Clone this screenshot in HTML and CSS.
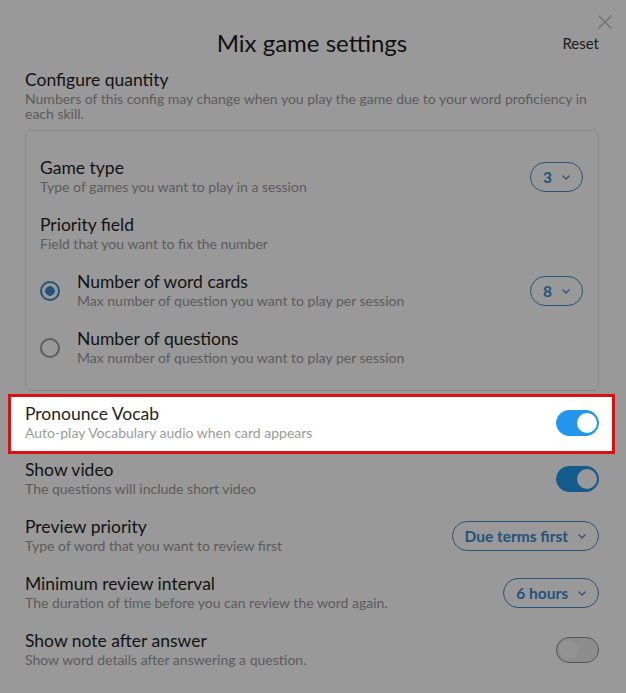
FILE: index.html
```html
<!DOCTYPE html>
<html lang="en">
<head>
  <meta charset="UTF-8">
  <title>Mix game settings</title>
  <link rel="stylesheet" href="styles.css">
</head>
<body>
<div class="modal">
  <button class="close" aria-label="Close">
    <svg width="14" height="14" viewBox="0 0 14 14"><path d="M1 1L13 13M13 1L1 13" stroke="currentColor" stroke-width="1.6" stroke-linecap="round"/></svg>
  </button>

  <div class="head">
    <span></span>
    <h1>Mix game settings</h1>
    <a class="reset">Reset</a>
  </div>

  <div class="intro">
    <div class="title">Configure quantity</div>
    <div class="sub">Numbers of this config may change when you play the game due to your word proficiency in each skill.</div>
  </div>

  <div class="card">
    <div class="row">
      <div class="text">
        <div class="title">Game type</div>
        <div class="sub">Type of games you want to play in a session</div>
      </div>
      <div class="select">3 <svg width="8" height="5" viewBox="0 0 8 5"><path d="M1 1l3 3 3-3" fill="none" stroke="currentColor" stroke-width="1.3" stroke-linecap="round" stroke-linejoin="round"/></svg></div>
    </div>
    <div class="row">
      <div class="text">
        <div class="title">Priority field</div>
        <div class="sub">Field that you want to fix the number</div>
      </div>
    </div>
    <div class="row">
      <span class="radio on"></span>
      <div class="text">
        <div class="title">Number of word cards</div>
        <div class="sub">Max number of question you want to play per session</div>
      </div>
      <div class="select">8 <svg width="8" height="5" viewBox="0 0 8 5"><path d="M1 1l3 3 3-3" fill="none" stroke="currentColor" stroke-width="1.3" stroke-linecap="round" stroke-linejoin="round"/></svg></div>
    </div>
    <div class="row">
      <span class="radio"></span>
      <div class="text">
        <div class="title">Number of questions</div>
        <div class="sub">Max number of question you want to play per session</div>
      </div>
    </div>
  </div>

  <div class="row highlight">
    <div class="text">
      <div class="title">Pronounce Vocab</div>
      <div class="sub">Auto-play Vocabulary audio when card appears</div>
    </div>
    <span class="toggle on"></span>
  </div>

  <div class="row">
    <div class="text">
      <div class="title">Show video</div>
      <div class="sub">The questions will include short video</div>
    </div>
    <span class="toggle on"></span>
  </div>

  <div class="row">
    <div class="text">
      <div class="title">Preview priority</div>
      <div class="sub">Type of word that you want to review first</div>
    </div>
    <div class="select">Due terms first <svg width="8" height="5" viewBox="0 0 8 5"><path d="M1 1l3 3 3-3" fill="none" stroke="currentColor" stroke-width="1.3" stroke-linecap="round" stroke-linejoin="round"/></svg></div>
  </div>

  <div class="row">
    <div class="text">
      <div class="title">Minimum review interval</div>
      <div class="sub">The duration of time before you can review the word again.</div>
    </div>
    <div class="select">6 hours <svg width="8" height="5" viewBox="0 0 8 5"><path d="M1 1l3 3 3-3" fill="none" stroke="currentColor" stroke-width="1.3" stroke-linecap="round" stroke-linejoin="round"/></svg></div>
  </div>

  <div class="row">
    <div class="text">
      <div class="title">Show note after answer</div>
      <div class="sub">Show word details after answering a question.</div>
    </div>
    <span class="toggle"></span>
  </div>
</div>

<!--dim layer, the highlighted row sits above it-->
<div class="overlay"></div>
</body>
</html>
```

FILE: styles.css
```css
* {
  margin: 0;
  padding: 0;
  box-sizing: border-box;
}
html,body {
  height: 100%;
  background: #fff;
  font-family: "Lato", "Noto Sans", sans-serif;
  color: #1f1f1f;
  overflow: hidden;
}

.modal {
  position: relative;
  padding: 28px 27px 0 25px;
}

.close {
  position: absolute;
  top: 15px;
  right: 14px;
  border: 0;
  background: none;
  color: #c4c4c4;
  display: flex;
}

.head {
  display: grid;
  grid-template-columns: 1fr auto 1fr;
  align-items: center;
  height: 30px;
}
.head h1 {
  font-size: 24px;
  font-weight: 400;
  line-height: 30px;
  color: #1c1c1c;
}
.reset {
  justify-self: end;
  font-size: 15px;
  color: #333;
}

.title {
  font-size: 17.5px;
  line-height: 20px;
}
.sub {
  font-size: 14px;
  line-height: 18px;
  color: #9a9a9a;
}

.intro {
  margin-top: 12px;
}
.intro .sub {
  line-height: 15px;
  margin-top: 1px;
}

.card {
  margin-top: 9px;
  margin-bottom: 3px;
  border: 1px solid #e4e4e4;
  border-radius: 6px;
  padding: 21px 15px 10px 14px;
}

.row {
  display: flex;
  align-items: center;
  padding: 6px 0 13px;
}
.row .text {
  flex: 1;
}

.highlight {
  position: relative;
  z-index: 2;
  background: #fff;
  border: 3px solid #d81010;
  margin: 0 -16px 0 -17px;
  padding: 7px 13px 9px 14px;
}

.select {
  display: flex;
  align-items: center;
  gap: 10px;
  height: 30px;
  padding: 0 12px;
  border: 1.5px solid #3d8fd0;
  border-radius: 16px;
  color: #3b8ad0;
  font-size: 15.5px;
  font-weight: 700;
}

.radio {
  width: 20px;
  height: 20px;
  border-radius: 50%;
  border: 2px solid #9a9a9a;
  margin: 0 17px 0 0;
  flex: none;
}
.radio.on {
  border-color: #3b8ad0;
  background: radial-gradient(circle, #3b8ad0 0 4.5px, #fff 5px);
}

.toggle {
  position: relative;
  width: 43px;
  height: 26px;
  border-radius: 13px;
  background: #ececec;
  border: 1.5px solid #8e8e8e;
  flex: none;
}
.toggle::after {
  content: "";
  position: absolute;
  top: 2px;
  left: 2px;
  width: 19px;
  height: 19px;
  border-radius: 50%;
  background: #f6f6f6;
}
.toggle.on {
  background: #2196ec;
  border-color: #2196ec;
}
.toggle.on::after {
  left: auto;
  right: 1px;
  top: 1.5px;
  width: 20px;
  height: 20px;
  background: #fff;
}

.overlay {
  position: fixed;
  inset: 0;
  z-index: 1;
  background: rgba(0,0,0,0.4);
}
```
